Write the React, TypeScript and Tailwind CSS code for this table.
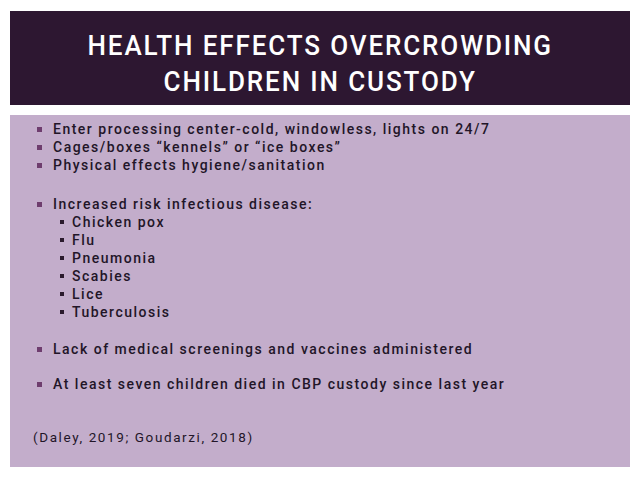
const mainItems1 = [
  "Enter processing center-cold, windowless, lights on 24/7",
  "Cages/boxes \u201ckennels\u201d or \u201cice boxes\u201d",
  "Physical effects hygiene/sanitation",
];

const diseases = ["Chicken pox", "Flu", "Pneumonia", "Scabies", "Lice", "Tuberculosis"];

function Bullet({ text }: { text: string }) {
  return (
    <li className="flex items-center h-[18px]">
      <span className="w-[5px] h-[5px] bg-[#6e3d6e] ml-[27px] mr-[11px] shrink-0" />
      <span>{text}</span>
    </li>
  );
}

function SubBullet({ text }: { text: string }) {
  return (
    <li className="flex items-center h-[18px]">
      <span className="w-[4px] h-[4px] bg-[#2a1a2c] ml-[50px] mr-[8px] shrink-0" />
      <span>{text}</span>
    </li>
  );
}

export default function App() {
  return (
    <div className="w-[640px] h-[480px] bg-white flex flex-col px-[10px] pt-[11px] overflow-hidden">
      {/* Title bar */}
      <div className="h-[94px] bg-[#2d1731] flex flex-col items-center justify-center pt-[12px]">
        <h1 className="text-white text-[28px] leading-[36px] tracking-[2px] text-center font-medium font-['Roboto',sans-serif] scale-x-[0.93]">
          HEALTH EFFECTS OVERCROWDING
          <br />
          CHILDREN IN CUSTODY
        </h1>
      </div>

      {/* Body */}
      <div className="mt-[10px] h-[352px] bg-[#c3adcb] pt-[5px] text-[#221528] text-[14px] font-medium tracking-[1.5px] font-['Roboto',sans-serif]">
        <ul>
          {mainItems1.map((t) => (
            <Bullet key={t} text={t} />
          ))}
        </ul>

        <ul className="mt-[21px]">
          <Bullet text="Increased risk infectious disease:" />
          {diseases.map((d) => (
            <SubBullet key={d} text={d} />
          ))}
        </ul>

        <ul className="mt-[19px]">
          <Bullet text="Lack of medical screenings and vaccines administered" />
        </ul>

        <ul className="mt-[17px]">
          <Bullet text="At least seven children died in CBP custody since last year" />
        </ul>

        <p className="mt-[35px] ml-[23px] h-[18px] leading-[18px] text-[13.5px] tracking-[1.6px] font-normal">
          (Daley, 2019; Goudarzi, 2018)
        </p>
      </div>
    </div>
  );
}
